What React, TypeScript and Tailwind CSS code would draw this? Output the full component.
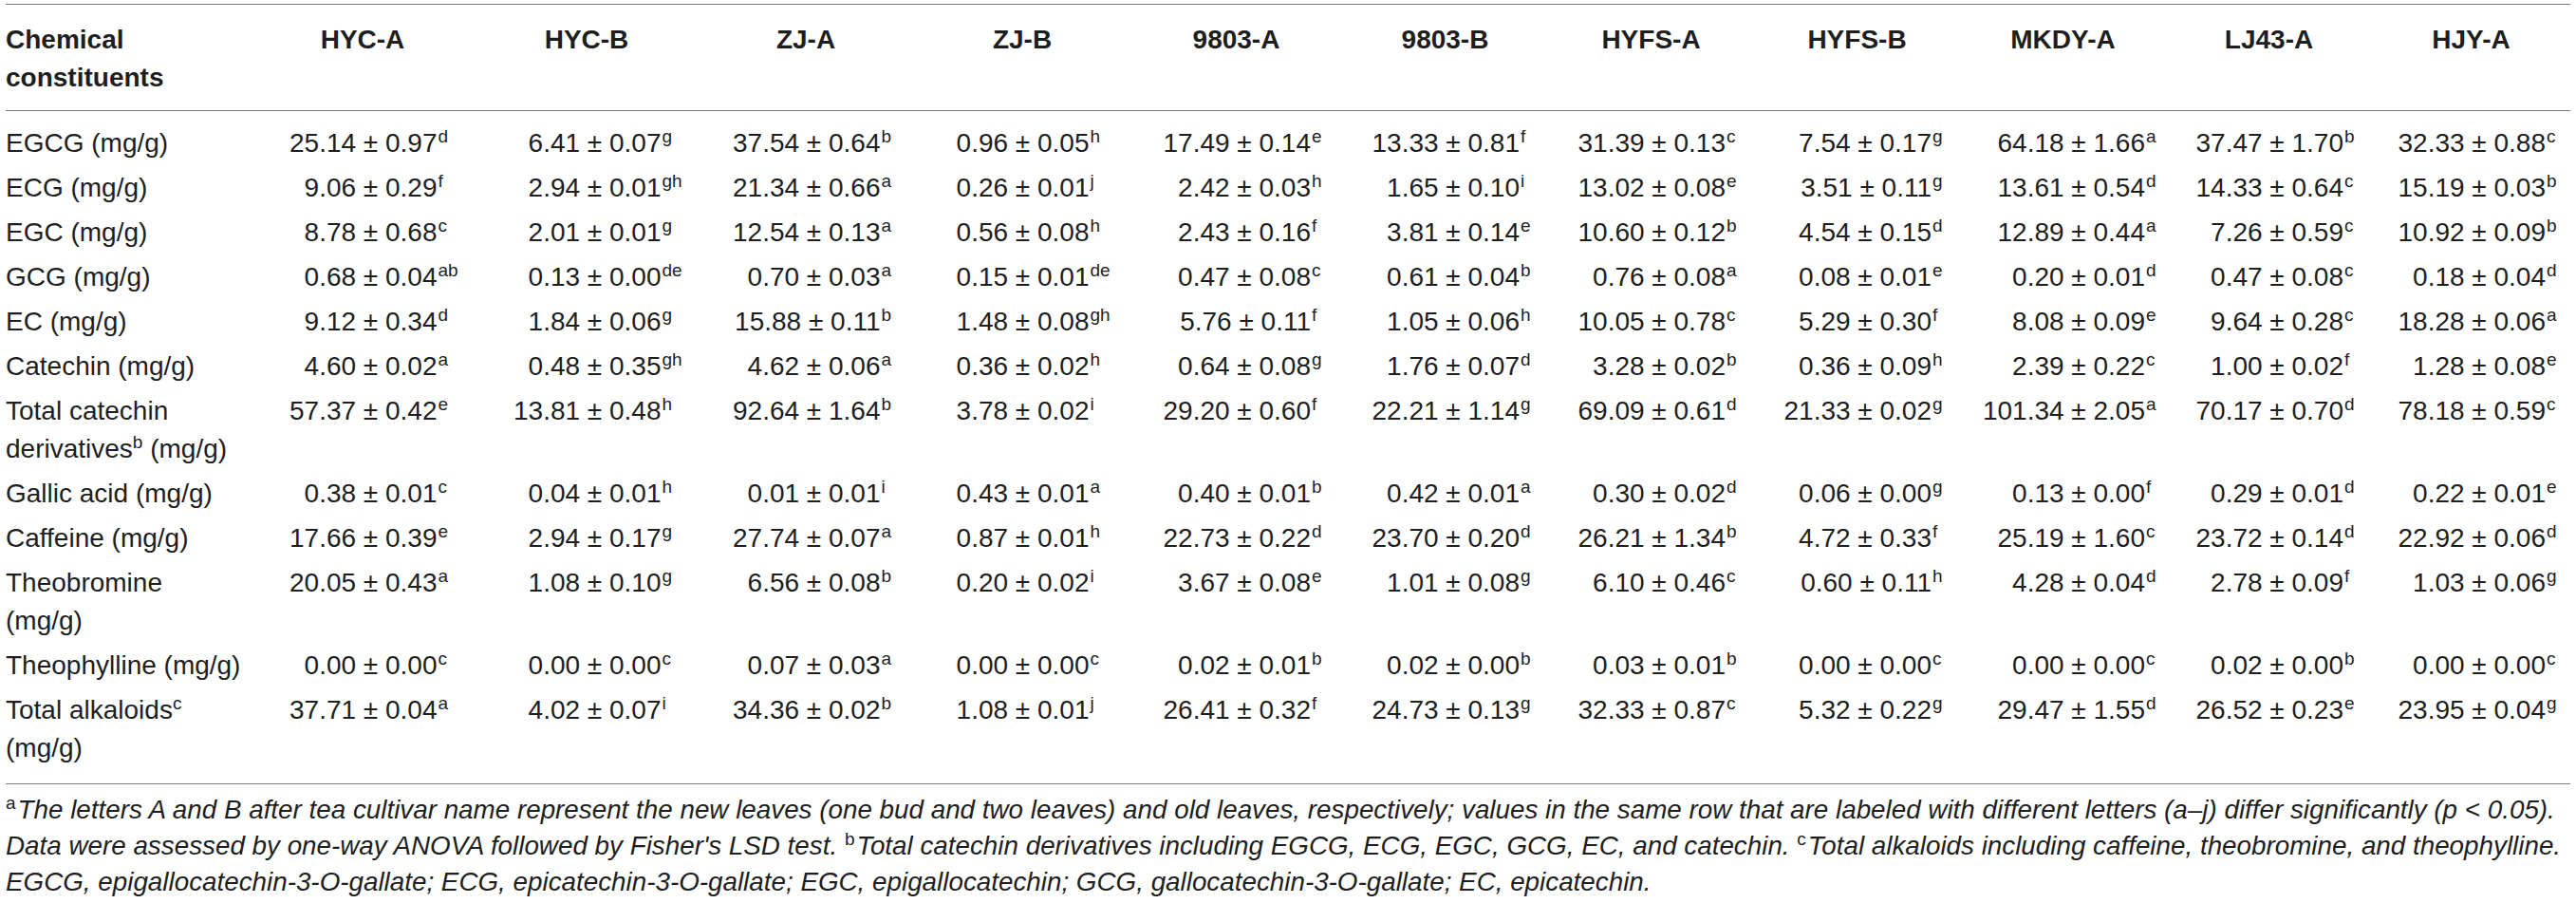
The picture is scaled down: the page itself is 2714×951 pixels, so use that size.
type Cell = [string, string];

const columns = ['HYC-A', 'HYC-B', 'ZJ-A', 'ZJ-B', '9803-A', '9803-B', 'HYFS-A', 'HYFS-B', 'MKDY-A', 'LJ43-A', 'HJY-A'];

// widths of the table columns, label column first
const colWidths = ['w-[257px]', 'w-[238px]', 'w-[234px]', 'w-[228px]', 'w-[228px]', 'w-[223px]', 'w-[217px]', 'w-[217px]', 'w-[217px]', 'w-[217px]', 'w-[217px]', 'w-[209px]'];

// box the number is right-aligned in (widest value of each column)
const boxWidths = ['w-[157px]', 'w-[157px]', 'w-[157px]', 'w-[141px]', 'w-[157px]', 'w-[157px]', 'w-[157px]', 'w-[157px]', 'w-[173px]', 'w-[157px]', 'w-[157px]'];

const rows: { label: React.ReactNode; values: Cell[] }[] = [
  {
    label: 'EGCG (mg/g)',
    values: [['25.14 ± 0.97', 'd'], ['6.41 ± 0.07', 'g'], ['37.54 ± 0.64', 'b'], ['0.96 ± 0.05', 'h'], ['17.49 ± 0.14', 'e'], ['13.33 ± 0.81', 'f'], ['31.39 ± 0.13', 'c'], ['7.54 ± 0.17', 'g'], ['64.18 ± 1.66', 'a'], ['37.47 ± 1.70', 'b'], ['32.33 ± 0.88', 'c']],
  },
  {
    label: 'ECG (mg/g)',
    values: [['9.06 ± 0.29', 'f'], ['2.94 ± 0.01', 'gh'], ['21.34 ± 0.66', 'a'], ['0.26 ± 0.01', 'j'], ['2.42 ± 0.03', 'h'], ['1.65 ± 0.10', 'i'], ['13.02 ± 0.08', 'e'], ['3.51 ± 0.11', 'g'], ['13.61 ± 0.54', 'd'], ['14.33 ± 0.64', 'c'], ['15.19 ± 0.03', 'b']],
  },
  {
    label: 'EGC (mg/g)',
    values: [['8.78 ± 0.68', 'c'], ['2.01 ± 0.01', 'g'], ['12.54 ± 0.13', 'a'], ['0.56 ± 0.08', 'h'], ['2.43 ± 0.16', 'f'], ['3.81 ± 0.14', 'e'], ['10.60 ± 0.12', 'b'], ['4.54 ± 0.15', 'd'], ['12.89 ± 0.44', 'a'], ['7.26 ± 0.59', 'c'], ['10.92 ± 0.09', 'b']],
  },
  {
    label: 'GCG (mg/g)',
    values: [['0.68 ± 0.04', 'ab'], ['0.13 ± 0.00', 'de'], ['0.70 ± 0.03', 'a'], ['0.15 ± 0.01', 'de'], ['0.47 ± 0.08', 'c'], ['0.61 ± 0.04', 'b'], ['0.76 ± 0.08', 'a'], ['0.08 ± 0.01', 'e'], ['0.20 ± 0.01', 'd'], ['0.47 ± 0.08', 'c'], ['0.18 ± 0.04', 'd']],
  },
  {
    label: 'EC (mg/g)',
    values: [['9.12 ± 0.34', 'd'], ['1.84 ± 0.06', 'g'], ['15.88 ± 0.11', 'b'], ['1.48 ± 0.08', 'gh'], ['5.76 ± 0.11', 'f'], ['1.05 ± 0.06', 'h'], ['10.05 ± 0.78', 'c'], ['5.29 ± 0.30', 'f'], ['8.08 ± 0.09', 'e'], ['9.64 ± 0.28', 'c'], ['18.28 ± 0.06', 'a']],
  },
  {
    label: 'Catechin (mg/g)',
    values: [['4.60 ± 0.02', 'a'], ['0.48 ± 0.35', 'gh'], ['4.62 ± 0.06', 'a'], ['0.36 ± 0.02', 'h'], ['0.64 ± 0.08', 'g'], ['1.76 ± 0.07', 'd'], ['3.28 ± 0.02', 'b'], ['0.36 ± 0.09', 'h'], ['2.39 ± 0.22', 'c'], ['1.00 ± 0.02', 'f'], ['1.28 ± 0.08', 'e']],
  },
  {
    label: (
      <>
        Total catechin
        <br />
        derivatives<sup className="text-[19px] top-[-10px]">b</sup> (mg/g)
      </>
    ),
    values: [['57.37 ± 0.42', 'e'], ['13.81 ± 0.48', 'h'], ['92.64 ± 1.64', 'b'], ['3.78 ± 0.02', 'i'], ['29.20 ± 0.60', 'f'], ['22.21 ± 1.14', 'g'], ['69.09 ± 0.61', 'd'], ['21.33 ± 0.02', 'g'], ['101.34 ± 2.05', 'a'], ['70.17 ± 0.70', 'd'], ['78.18 ± 0.59', 'c']],
  },
  {
    label: 'Gallic acid (mg/g)',
    values: [['0.38 ± 0.01', 'c'], ['0.04 ± 0.01', 'h'], ['0.01 ± 0.01', 'i'], ['0.43 ± 0.01', 'a'], ['0.40 ± 0.01', 'b'], ['0.42 ± 0.01', 'a'], ['0.30 ± 0.02', 'd'], ['0.06 ± 0.00', 'g'], ['0.13 ± 0.00', 'f'], ['0.29 ± 0.01', 'd'], ['0.22 ± 0.01', 'e']],
  },
  {
    label: 'Caffeine (mg/g)',
    values: [['17.66 ± 0.39', 'e'], ['2.94 ± 0.17', 'g'], ['27.74 ± 0.07', 'a'], ['0.87 ± 0.01', 'h'], ['22.73 ± 0.22', 'd'], ['23.70 ± 0.20', 'd'], ['26.21 ± 1.34', 'b'], ['4.72 ± 0.33', 'f'], ['25.19 ± 1.60', 'c'], ['23.72 ± 0.14', 'd'], ['22.92 ± 0.06', 'd']],
  },
  {
    label: (
      <>
        Theobromine
        <br />
        (mg/g)
      </>
    ),
    values: [['20.05 ± 0.43', 'a'], ['1.08 ± 0.10', 'g'], ['6.56 ± 0.08', 'b'], ['0.20 ± 0.02', 'i'], ['3.67 ± 0.08', 'e'], ['1.01 ± 0.08', 'g'], ['6.10 ± 0.46', 'c'], ['0.60 ± 0.11', 'h'], ['4.28 ± 0.04', 'd'], ['2.78 ± 0.09', 'f'], ['1.03 ± 0.06', 'g']],
  },
  {
    label: 'Theophylline (mg/g)',
    values: [['0.00 ± 0.00', 'c'], ['0.00 ± 0.00', 'c'], ['0.07 ± 0.03', 'a'], ['0.00 ± 0.00', 'c'], ['0.02 ± 0.01', 'b'], ['0.02 ± 0.00', 'b'], ['0.03 ± 0.01', 'b'], ['0.00 ± 0.00', 'c'], ['0.00 ± 0.00', 'c'], ['0.02 ± 0.00', 'b'], ['0.00 ± 0.00', 'c']],
  },
  {
    label: (
      <>
        Total alkaloids<sup className="text-[19px] top-[-10px]">c</sup>
        <br />
        (mg/g)
      </>
    ),
    values: [['37.71 ± 0.04', 'a'], ['4.02 ± 0.07', 'i'], ['34.36 ± 0.02', 'b'], ['1.08 ± 0.01', 'j'], ['26.41 ± 0.32', 'f'], ['24.73 ± 0.13', 'g'], ['32.33 ± 0.87', 'c'], ['5.32 ± 0.22', 'g'], ['29.47 ± 1.55', 'd'], ['26.52 ± 0.23', 'e'], ['23.95 ± 0.04', 'g']],
  },
];

export default function App() {
  return (
    <div className="w-[2714px] h-[951px] bg-white px-[6px] pt-[4px] text-[#1e1e1e] font-['Liberation_Sans',Arial,sans-serif] overflow-hidden">
      <table className="table-fixed border-collapse w-[2702px] text-[28px] leading-[40px]">
        <colgroup>
          {colWidths.map((w, i) => (
            <col key={i} className={w} />
          ))}
        </colgroup>
        <thead>
          <tr>
            <th className="border-y border-[#7d7d7d] pt-[17px] pb-[14px] text-left align-top font-bold">
              Chemical
              <br />
              constituents
            </th>
            {columns.map((c) => (
              <th key={c} className="border-y border-[#7d7d7d] pt-[17px] pb-[14px] text-center align-top font-bold">
                {c}
              </th>
            ))}
          </tr>
        </thead>
        <tbody>
          {rows.map((row, r) => {
            const pad = r === 0 ? 'pt-[14px] pb-[3px]' : r === rows.length - 1 ? 'pt-[4px] pb-[17px]' : 'pt-[4px] pb-[3px]';
            return (
              <tr key={r} className={r === rows.length - 1 ? 'border-b border-[#7d7d7d]' : ''}>
                <td className={`${pad} text-left align-top whitespace-nowrap`}>{row.label}</td>
                {row.values.map(([num, sup], c) => (
                  <td key={c} className={`${pad} text-center align-top whitespace-nowrap`}>
                    <span className={`relative inline-block text-right ${boxWidths[c]}`}>
                      {num}
                      <span className="absolute left-full top-[3px] ml-[1px] text-[19px] leading-none">{sup}</span>
                    </span>
                  </td>
                ))}
              </tr>
            );
          })}
        </tbody>
      </table>

      <div className="pt-[8px] text-[27.8px] leading-[38px] italic whitespace-nowrap">
        <sup className="not-italic text-[19px] top-[-10px] mr-[2px]">a</sup>
        The letters A and B after tea cultivar name represent the new leaves (one bud and two leaves) and old leaves, respectively; values in the same row that are labeled with different letters (a–j) differ significantly (p &lt; 0.05).
        <br />
        Data were assessed by one-way ANOVA followed by Fisher&apos;s LSD test.{' '}
        <sup className="not-italic text-[19px] top-[-10px] mr-[2px]">b</sup>
        Total catechin derivatives including EGCG, ECG, EGC, GCG, EC, and catechin.{' '}
        <sup className="not-italic text-[19px] top-[-10px] mr-[2px]">c</sup>
        Total alkaloids including caffeine, theobromine, and theophylline.
        <br />
        EGCG, epigallocatechin-3-O-gallate; ECG, epicatechin-3-O-gallate; EGC, epigallocatechin; GCG, gallocatechin-3-O-gallate; EC, epicatechin.
      </div>
    </div>
  );
}
